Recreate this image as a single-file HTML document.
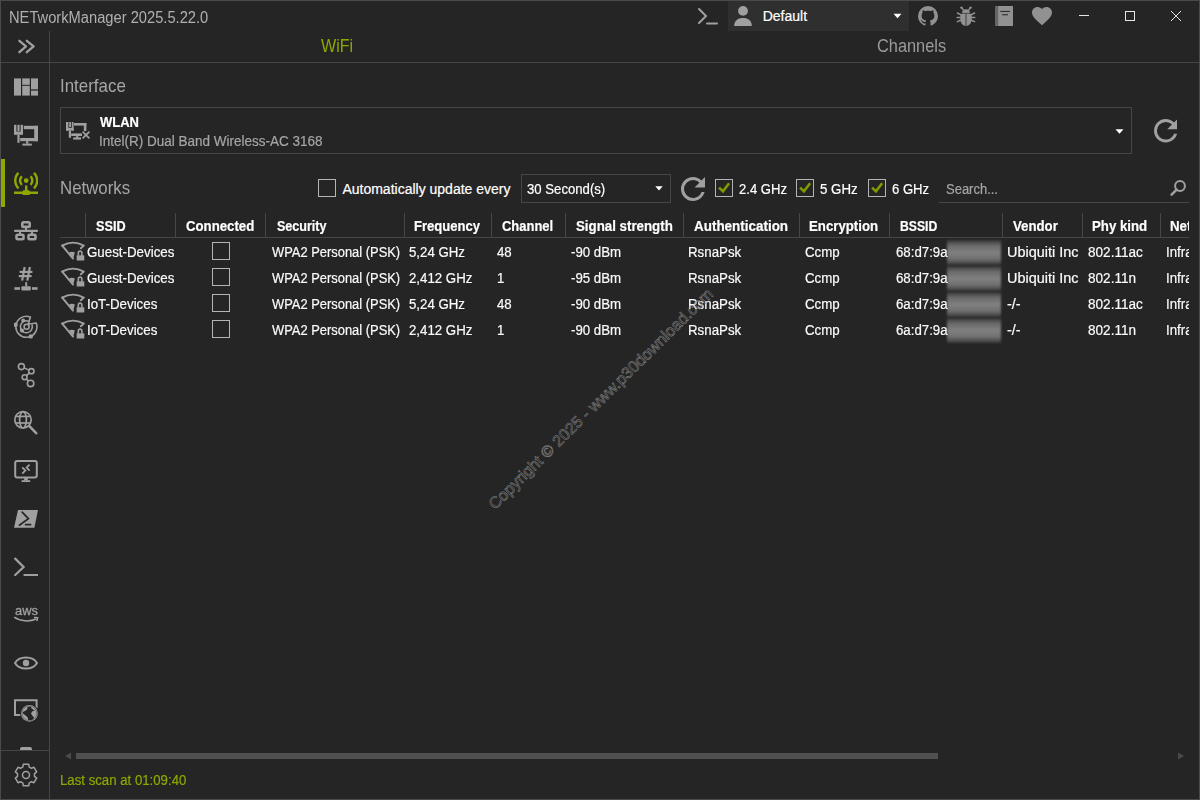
<!DOCTYPE html>
<html><head><meta charset="utf-8"><style>
html,body{margin:0;padding:0;}
body{width:1200px;height:800px;background:#252525;position:relative;overflow:hidden;font-family:"Liberation Sans",sans-serif;}
.t{position:absolute;white-space:nowrap;line-height:1;-webkit-text-stroke:0.2px currentColor;}
.wm{font-size:16px;color:transparent;-webkit-text-stroke:0.5px #858585;transform-origin:0 0;transform:rotate(-44.5deg);}
</style></head><body>
<div style="position:absolute;left:0px;top:0px;width:1200px;height:800px;box-sizing:border-box;border:1px solid #4a4a4a;"></div><div class="t" style="left:8.60px;top:9.63px;font-size:15.8px;color:#b0b0b0;font-weight:normal;-webkit-text-stroke:0;transform:scaleX(0.93);transform-origin:0 0;">NETworkManager 2025.5.22.0</div><svg style="position:absolute;left:696px;top:6px;" width="24" height="20" viewBox="0 0 24 20"><polyline points="3,3 10,10 3,17" fill="none" stroke="#a0a0a0" stroke-width="2" stroke-linecap="round" stroke-linejoin="miter"/><line x1="11" y1="17.5" x2="21" y2="17.5" stroke="#a0a0a0" stroke-width="2" stroke-linecap="round"/></svg><div style="position:absolute;left:728px;top:1px;width:181px;height:30px;background:#2f2f2f;"></div><svg style="position:absolute;left:733px;top:5px;" width="20" height="22" viewBox="0 0 20 22"><circle cx="10" cy="5.9" r="4.9" fill="#a0a0a0"/><path d="M1.2,21 C1.2,15.5 5,13 10,13 C15,13 18.8,15.5 18.8,21 Z" fill="#a0a0a0"/></svg><div class="t" style="left:762.70px;top:9px;font-size:14px;color:#ffffff;font-weight:normal;transform:scaleX(1.0);transform-origin:0 0">Default</div><svg style="position:absolute;left:893px;top:13px;" width="9" height="6" viewBox="0 0 9 6"><polygon points="0.5,0.8 8.5,0.8 4.5,5.2" fill="#ffffff"/></svg><svg style="position:absolute;left:918px;top:6px;" width="20" height="20" viewBox="2 2 20 20"><path fill="#919191" d="M12,2A10,10 0 0,0 2,12C2,16.42 4.87,20.17 8.84,21.5C9.34,21.58 9.5,21.27 9.5,21C9.5,20.77 9.5,20.14 9.5,19.31C6.73,19.94 6.14,18 6.14,18C5.68,16.84 5.03,16.5 5.03,16.5C4.12,15.88 5.1,15.9 5.1,15.9C6.1,15.97 6.63,16.93 6.63,16.93C7.5,18.45 8.97,18 9.54,17.76C9.63,17.11 9.89,16.67 10.17,16.42C7.95,16.17 5.62,15.31 5.62,11.5C5.62,10.39 6,9.5 6.65,8.79C6.55,8.54 6.2,7.5 6.75,6.15C6.75,6.15 7.59,5.88 9.5,7.17C10.29,6.95 11.15,6.84 12,6.84C12.85,6.84 13.71,6.95 14.5,7.17C16.41,5.88 17.25,6.15 17.25,6.15C17.8,7.5 17.45,8.54 17.35,8.79C18,9.5 18.38,10.39 18.38,11.5C18.38,15.32 16.04,16.16 13.81,16.41C14.17,16.72 14.5,17.33 14.5,18.26C14.5,19.6 14.5,20.68 14.5,21C14.5,21.27 14.66,21.59 15.17,21.5C19.14,20.16 22,16.42 22,12A10,10 0 0,0 12,2Z"/></svg><svg style="position:absolute;left:956px;top:5px;" width="20" height="22" viewBox="956 5 20 22"><g fill="#919191"><ellipse cx="966" cy="12.6" rx="3.8" ry="3.3"/><path d="M960.3,13.6 H971.7 V19 C971.7,23.2 969.2,25.9 966,25.9 C962.8,25.9 960.3,23.2 960.3,19 Z"/><circle cx="961.4" cy="7.6" r="1.2"/><circle cx="970.6" cy="7.6" r="1.2"/></g><g stroke="#919191" stroke-width="1.5" stroke-linecap="round"><line x1="961.6" y1="7.8" x2="963.6" y2="10.4"/><line x1="970.4" y1="7.8" x2="968.4" y2="10.4"/><line x1="957.4" y1="13" x2="960.6" y2="14.7"/><line x1="974.6" y1="13" x2="971.4" y2="14.7"/><line x1="957.2" y1="17.4" x2="960.4" y2="17.4"/><line x1="974.8" y1="17.4" x2="971.6" y2="17.4"/><line x1="957.4" y1="21.6" x2="960.6" y2="20.3"/><line x1="974.6" y1="21.6" x2="971.4" y2="20.3"/></g><line x1="960" y1="13.4" x2="972" y2="13.4" stroke="#3a3a3a" stroke-width="0.8"/><line x1="966" y1="13.8" x2="966" y2="26" stroke="#4a4a4a" stroke-width="1.1"/></svg><svg style="position:absolute;left:995px;top:6px;" width="18" height="20" viewBox="0 0 18 20"><rect x="0" y="0" width="18" height="20" fill="#919191"/><rect x="0" y="0" width="2.4" height="20" fill="#666"/><rect x="2.4" y="0" width="0.7" height="20" fill="#555"/><rect x="5.3" y="4.9" width="9.7" height="1.1" fill="#2e2e2e"/><rect x="7" y="8.2" width="6" height="1.1" fill="#2e2e2e"/></svg><svg style="position:absolute;left:1030px;top:3.8px;" width="24" height="24" viewBox="0 0 24 24"><path fill="#919191" d="M12,21.35L10.55,20.03C5.4,15.36 2,12.27 2,8.5C2,5.41 4.42,3 7.5,3C9.24,3 10.91,3.81 12,5.08C13.09,3.81 14.76,3 16.5,3C19.58,3 22,5.41 22,8.5C22,12.27 18.6,15.36 13.45,20.03L12,21.35Z"/></svg><div style="position:absolute;left:1079px;top:15px;width:10px;height:1px;background:#e6e6e6;"></div><div style="position:absolute;left:1125px;top:11px;width:10px;height:10px;box-sizing:border-box;border:1px solid #e6e6e6;"></div><svg style="position:absolute;left:1170px;top:10px;" width="12" height="12" viewBox="0 0 12 12"><line x1="1" y1="1" x2="11" y2="11" stroke="#e6e6e6" stroke-width="1"/><line x1="11" y1="1" x2="1" y2="11" stroke="#e6e6e6" stroke-width="1"/></svg><div style="position:absolute;left:49px;top:31px;width:1px;height:768px;background:#464646;"></div><div style="position:absolute;left:1px;top:62px;width:1198px;height:1px;background:#464646;"></div><div style="position:absolute;left:1px;top:750px;width:48px;height:1px;background:#464646;"></div><div class="t" style="left:321.00px;top:36.59px;font-size:18.2px;color:#8fa700;font-weight:normal;-webkit-text-stroke:0;transform:scaleX(0.885);transform-origin:0 0;">WiFi</div><div class="t" style="left:877.00px;top:36.51px;font-size:18.3px;color:#9a9a9a;font-weight:normal;-webkit-text-stroke:0;transform:scaleX(0.895);transform-origin:0 0;">Channels</div><div class="t" style="left:59.50px;top:77.85px;font-size:17.9px;color:#a6a6a6;font-weight:normal;-webkit-text-stroke:0;transform:scaleX(0.945);transform-origin:0 0;">Interface</div><div style="position:absolute;left:60px;top:107px;width:1072px;height:47px;box-sizing:border-box;border:1px solid #464646;"></div><div class="t" style="left:100.40px;top:115px;font-size:14px;color:#ffffff;font-weight:bold;transform:scaleX(0.9286);transform-origin:0 0">WLAN</div><div class="t" style="left:99.44px;top:134px;font-size:14px;color:#a6a6a6;font-weight:normal;transform:scaleX(0.9636);transform-origin:0 0">Intel(R) Dual Band Wireless-AC 3168</div><svg style="position:absolute;left:1115px;top:128.5px;" width="9" height="5" viewBox="0 0 9 5"><polygon points="0.5,0.3 8.5,0.3 4.5,4.8" fill="#ffffff"/></svg><svg style="position:absolute;left:66px;top:122px;" width="24" height="18" viewBox="66 122 24 18"><g fill="#a0a0a0"><rect x="66" y="122" width="2.4" height="8.6"/><rect x="69.2" y="122" width="1.8" height="5"/><rect x="71.8" y="122" width="1.8" height="8.6"/><rect x="66" y="127.8" width="7.6" height="2.8"/><rect x="68.8" y="130.6" width="2.2" height="7.2"/><rect x="74" y="123" width="12.4" height="2.6"/><rect x="83.8" y="123" width="2.6" height="8"/><rect x="71.2" y="133.4" width="10.8" height="2.6"/><rect x="76.2" y="136" width="2" height="2"/><rect x="73.2" y="137.4" width="7.8" height="2.2"/></g><g stroke="#a0a0a0" stroke-width="1.7"><line x1="82.6" y1="131.6" x2="89.4" y2="138.4"/><line x1="89.4" y1="131.6" x2="82.6" y2="138.4"/></g></svg><svg style="position:absolute;left:1153.5px;top:119px;" width="23.5" height="23.5" viewBox="4 4 16 16"><path fill="#a0a0a0" d="M17.65,6.35C16.2,4.9 14.21,4 12,4A8,8 0 0,0 4,12A8,8 0 0,0 12,20C15.73,20 18.84,17.45 19.73,14H17.65C16.83,16.33 14.61,18 12,18A6,6 0 0,1 6,12A6,6 0 0,1 12,6C13.66,6 15.14,6.69 16.22,7.78L13,11H20V4L17.65,6.35Z"/></svg><div class="t" style="left:59.50px;top:180.05px;font-size:17.9px;color:#a6a6a6;font-weight:normal;-webkit-text-stroke:0;transform:scaleX(0.94);transform-origin:0 0;">Networks</div><div style="position:absolute;left:318px;top:179px;width:18px;height:18px;box-sizing:border-box;border:1px solid #b4b4b4;"></div><div class="t" style="left:342.40px;top:182px;font-size:14px;color:#ffffff;font-weight:normal;transform:scaleX(1.0);transform-origin:0 0">Automatically update every</div><div style="position:absolute;left:521px;top:174px;width:150px;height:29px;box-sizing:border-box;border:1px solid #464646;"></div><div class="t" style="left:527.00px;top:182px;font-size:14px;color:#ffffff;font-weight:normal;transform:scaleX(0.9398);transform-origin:0 0">30 Second(s)</div><svg style="position:absolute;left:654.5px;top:186px;" width="8" height="5" viewBox="0 0 8 5"><polygon points="0.3,0.3 7.7,0.3 4,4.5" fill="#ffffff"/></svg><svg style="position:absolute;left:681px;top:177px;" width="24" height="24" viewBox="4 4 16 16"><path fill="#a0a0a0" d="M17.65,6.35C16.2,4.9 14.21,4 12,4A8,8 0 0,0 4,12A8,8 0 0,0 12,20C15.73,20 18.84,17.45 19.73,14H17.65C16.83,16.33 14.61,18 12,18A6,6 0 0,1 6,12A6,6 0 0,1 12,6C13.66,6 15.14,6.69 16.22,7.78L13,11H20V4L17.65,6.35Z"/></svg><div style="position:absolute;left:715px;top:179px;width:18px;height:18px;box-sizing:border-box;border:1px solid #b4b4b4;"></div><svg style="position:absolute;left:715px;top:179px;" width="18" height="18" viewBox="0 0 18 18"><polyline points="4.05,8.6 7.95,12.3 14.1,4.2" fill="none" stroke="#809a00" stroke-width="2.6"/></svg><div class="t" style="left:739.00px;top:182px;font-size:14px;color:#ffffff;font-weight:normal;transform:scaleX(0.9333);transform-origin:0 0">2.4 GHz</div><div style="position:absolute;left:796px;top:179px;width:18px;height:18px;box-sizing:border-box;border:1px solid #b4b4b4;"></div><svg style="position:absolute;left:796px;top:179px;" width="18" height="18" viewBox="0 0 18 18"><polyline points="4.05,8.6 7.95,12.3 14.1,4.2" fill="none" stroke="#809a00" stroke-width="2.6"/></svg><div class="t" style="left:819.65px;top:182px;font-size:14px;color:#ffffff;font-weight:normal;transform:scaleX(0.9487);transform-origin:0 0">5 GHz</div><div style="position:absolute;left:868px;top:179px;width:18px;height:18px;box-sizing:border-box;border:1px solid #b4b4b4;"></div><svg style="position:absolute;left:868px;top:179px;" width="18" height="18" viewBox="0 0 18 18"><polyline points="4.05,8.6 7.95,12.3 14.1,4.2" fill="none" stroke="#809a00" stroke-width="2.6"/></svg><div class="t" style="left:891.60px;top:182px;font-size:14px;color:#ffffff;font-weight:normal;transform:scaleX(0.935);transform-origin:0 0">6 GHz</div><div class="t" style="left:945.97px;top:182px;font-size:14px;color:#a6a6a6;font-weight:normal;transform:scaleX(0.9278);transform-origin:0 0">Search...</div><svg style="position:absolute;left:1168px;top:179px;" width="20" height="18" viewBox="0 0 20 18"><circle cx="12" cy="7" r="4.9" fill="none" stroke="#a0a0a0" stroke-width="2"/><line x1="8.6" y1="10.6" x2="3.6" y2="15.6" stroke="#a0a0a0" stroke-width="2.6" stroke-linecap="round"/></svg><div style="position:absolute;left:939px;top:202px;width:250px;height:1px;background:#464646;"></div><div style="position:absolute;left:85px;top:213px;width:1px;height:24px;background:#464646;"></div><div style="position:absolute;left:175px;top:213px;width:1px;height:24px;background:#464646;"></div><div style="position:absolute;left:265px;top:213px;width:1px;height:24px;background:#464646;"></div><div style="position:absolute;left:404px;top:213px;width:1px;height:24px;background:#464646;"></div><div style="position:absolute;left:491px;top:213px;width:1px;height:24px;background:#464646;"></div><div style="position:absolute;left:565px;top:213px;width:1px;height:24px;background:#464646;"></div><div style="position:absolute;left:683px;top:213px;width:1px;height:24px;background:#464646;"></div><div style="position:absolute;left:799px;top:213px;width:1px;height:24px;background:#464646;"></div><div style="position:absolute;left:889px;top:213px;width:1px;height:24px;background:#464646;"></div><div style="position:absolute;left:1002px;top:213px;width:1px;height:24px;background:#464646;"></div><div style="position:absolute;left:1082px;top:213px;width:1px;height:24px;background:#464646;"></div><div style="position:absolute;left:1160px;top:213px;width:1px;height:24px;background:#464646;"></div><div style="position:absolute;left:60px;top:237px;width:1129px;height:1px;background:#464646;"></div><div style="position:absolute;left:60px;top:205px;width:1129px;height:40px;overflow:hidden"><div class="t" style="left:36.00px;top:14px;font-size:14px;color:#ffffff;font-weight:bold;transform:scaleX(0.906);transform-origin:0 0">SSID</div><div class="t" style="left:126.00px;top:14px;font-size:14px;color:#ffffff;font-weight:bold;transform:scaleX(0.944);transform-origin:0 0">Connected</div><div class="t" style="left:216.50px;top:14px;font-size:14px;color:#ffffff;font-weight:bold;transform:scaleX(0.896);transform-origin:0 0">Security</div><div class="t" style="left:353.80px;top:14px;font-size:14px;color:#ffffff;font-weight:bold;transform:scaleX(0.933);transform-origin:0 0">Frequency</div><div class="t" style="left:442.00px;top:14px;font-size:14px;color:#ffffff;font-weight:bold;transform:scaleX(0.927);transform-origin:0 0">Channel</div><div class="t" style="left:515.50px;top:14px;font-size:14px;color:#ffffff;font-weight:bold;transform:scaleX(0.95);transform-origin:0 0">Signal strength</div><div class="t" style="left:633.90px;top:14px;font-size:14px;color:#ffffff;font-weight:bold;transform:scaleX(0.96);transform-origin:0 0">Authentication</div><div class="t" style="left:749.10px;top:14px;font-size:14px;color:#ffffff;font-weight:bold;transform:scaleX(0.944);transform-origin:0 0">Encryption</div><div class="t" style="left:839.90px;top:14px;font-size:14px;color:#ffffff;font-weight:bold;transform:scaleX(0.871);transform-origin:0 0">BSSID</div><div class="t" style="left:952.50px;top:14px;font-size:14px;color:#ffffff;font-weight:bold;transform:scaleX(0.944);transform-origin:0 0">Vendor</div><div class="t" style="left:1032.40px;top:14px;font-size:14px;color:#ffffff;font-weight:bold;transform:scaleX(0.946);transform-origin:0 0">Phy kind</div><div class="t" style="left:1109.80px;top:14px;font-size:14px;color:#ffffff;font-weight:bold;transform:scaleX(0.95);transform-origin:0 0">Network kind</div></div><svg style="position:absolute;left:60px;top:241px;" width="25" height="22" viewBox="0 0 25 22"><path d="M2.2,4.6 Q13,-1.4 23.8,4.6 L20.9,7.3" fill="none" stroke="#a0a0a0" stroke-width="1.9" stroke-linejoin="round" stroke-linecap="round"/><path d="M2.2,4.6 L13,17.6" fill="none" stroke="#a0a0a0" stroke-width="1.9" stroke-linecap="round"/><path d="M9,11.4 C11,10.6 13,10.6 14.9,11.6 L13,18 Z" fill="#a0a0a0"/><path d="M18.3,14.6 V11.9 A1.8,1.8 0 0 1 21.9,11.9 V14.6" fill="none" stroke="#a0a0a0" stroke-width="1.6"/><rect x="16.2" y="14.2" width="8.1" height="5.3" rx="0.5" fill="#a0a0a0"/><path d="M14.9,13 L16.2,13 L16.2,20" fill="none" stroke="#252525" stroke-width="0.8"/></svg><div style="position:absolute;left:212px;top:242px;width:18px;height:18px;box-sizing:border-box;border:1px solid #b4b4b4;"></div><div style="position:absolute;left:947px;top:240px;width:54px;height:25px;background:linear-gradient(to bottom,#363636 0%,#6a6a6a 22%,#808080 50%,#707070 76%,#383838 100%);filter:blur(0.8px);"></div><div class="t" style="left:87.40px;top:245px;font-size:14px;color:#fafafa;font-weight:normal;transform:scaleX(0.952);transform-origin:0 0">Guest-Devices</div><div class="t" style="left:272.00px;top:245px;font-size:14px;color:#fafafa;font-weight:normal;transform:scaleX(0.922);transform-origin:0 0">WPA2 Personal (PSK)</div><div class="t" style="left:409.00px;top:245px;font-size:14px;color:#fafafa;font-weight:normal;transform:scaleX(0.947);transform-origin:0 0">5,24 GHz</div><div class="t" style="left:496.80px;top:245px;font-size:14px;color:#fafafa;font-weight:normal;transform:scaleX(0.947);transform-origin:0 0">48</div><div class="t" style="left:571.20px;top:245px;font-size:14px;color:#fafafa;font-weight:normal;transform:scaleX(0.947);transform-origin:0 0">-90 dBm</div><div class="t" style="left:688.30px;top:245px;font-size:14px;color:#fafafa;font-weight:normal;transform:scaleX(0.95);transform-origin:0 0">RsnaPsk</div><div class="t" style="left:804.80px;top:245px;font-size:14px;color:#fafafa;font-weight:normal;transform:scaleX(0.95);transform-origin:0 0">Ccmp</div><div class="t" style="left:896.10px;top:245px;font-size:14px;color:#fafafa;font-weight:normal;transform:scaleX(0.947);transform-origin:0 0">68:d7:9a</div><div class="t" style="left:1006.50px;top:245px;font-size:14px;color:#fafafa;font-weight:normal;transform:scaleX(1.031);transform-origin:0 0">Ubiquiti Inc</div><div class="t" style="left:1088.00px;top:245px;font-size:14px;color:#fafafa;font-weight:normal;transform:scaleX(0.97);transform-origin:0 0">802.11ac</div><div style="position:absolute;left:1160px;top:238px;width:29px;height:26px;overflow:hidden"><div class="t" style="left:5.6px;top:7px;font-size:14px;color:#fafafa;transform:scaleX(0.95);transform-origin:0 0">Infrastructure</div></div><svg style="position:absolute;left:60px;top:267px;" width="25" height="22" viewBox="0 0 25 22"><path d="M2.2,4.6 Q13,-1.4 23.8,4.6 L20.9,7.3" fill="none" stroke="#a0a0a0" stroke-width="1.9" stroke-linejoin="round" stroke-linecap="round"/><path d="M2.2,4.6 L13,17.6" fill="none" stroke="#a0a0a0" stroke-width="1.9" stroke-linecap="round"/><path d="M9,11.4 C11,10.6 13,10.6 14.9,11.6 L13,18 Z" fill="#a0a0a0"/><path d="M18.3,14.6 V11.9 A1.8,1.8 0 0 1 21.9,11.9 V14.6" fill="none" stroke="#a0a0a0" stroke-width="1.6"/><rect x="16.2" y="14.2" width="8.1" height="5.3" rx="0.5" fill="#a0a0a0"/><path d="M14.9,13 L16.2,13 L16.2,20" fill="none" stroke="#252525" stroke-width="0.8"/></svg><div style="position:absolute;left:212px;top:268px;width:18px;height:18px;box-sizing:border-box;border:1px solid #b4b4b4;"></div><div style="position:absolute;left:947px;top:266px;width:54px;height:25px;background:linear-gradient(to bottom,#363636 0%,#6a6a6a 22%,#808080 50%,#707070 76%,#383838 100%);filter:blur(0.8px);"></div><div class="t" style="left:87.40px;top:271px;font-size:14px;color:#fafafa;font-weight:normal;transform:scaleX(0.952);transform-origin:0 0">Guest-Devices</div><div class="t" style="left:272.00px;top:271px;font-size:14px;color:#fafafa;font-weight:normal;transform:scaleX(0.922);transform-origin:0 0">WPA2 Personal (PSK)</div><div class="t" style="left:409.00px;top:271px;font-size:14px;color:#fafafa;font-weight:normal;transform:scaleX(0.947);transform-origin:0 0">2,412 GHz</div><div class="t" style="left:496.80px;top:271px;font-size:14px;color:#fafafa;font-weight:normal;transform:scaleX(0.947);transform-origin:0 0">1</div><div class="t" style="left:571.20px;top:271px;font-size:14px;color:#fafafa;font-weight:normal;transform:scaleX(0.947);transform-origin:0 0">-95 dBm</div><div class="t" style="left:688.30px;top:271px;font-size:14px;color:#fafafa;font-weight:normal;transform:scaleX(0.95);transform-origin:0 0">RsnaPsk</div><div class="t" style="left:804.80px;top:271px;font-size:14px;color:#fafafa;font-weight:normal;transform:scaleX(0.95);transform-origin:0 0">Ccmp</div><div class="t" style="left:896.10px;top:271px;font-size:14px;color:#fafafa;font-weight:normal;transform:scaleX(0.947);transform-origin:0 0">68:d7:9a</div><div class="t" style="left:1006.50px;top:271px;font-size:14px;color:#fafafa;font-weight:normal;transform:scaleX(1.031);transform-origin:0 0">Ubiquiti Inc</div><div class="t" style="left:1088.00px;top:271px;font-size:14px;color:#fafafa;font-weight:normal;transform:scaleX(0.97);transform-origin:0 0">802.11n</div><div style="position:absolute;left:1160px;top:264px;width:29px;height:26px;overflow:hidden"><div class="t" style="left:5.6px;top:7px;font-size:14px;color:#fafafa;transform:scaleX(0.95);transform-origin:0 0">Infrastructure</div></div><svg style="position:absolute;left:60px;top:293px;" width="25" height="22" viewBox="0 0 25 22"><path d="M2.2,4.6 Q13,-1.4 23.8,4.6 L20.9,7.3" fill="none" stroke="#a0a0a0" stroke-width="1.9" stroke-linejoin="round" stroke-linecap="round"/><path d="M2.2,4.6 L13,17.6" fill="none" stroke="#a0a0a0" stroke-width="1.9" stroke-linecap="round"/><path d="M9,11.4 C11,10.6 13,10.6 14.9,11.6 L13,18 Z" fill="#a0a0a0"/><path d="M18.3,14.6 V11.9 A1.8,1.8 0 0 1 21.9,11.9 V14.6" fill="none" stroke="#a0a0a0" stroke-width="1.6"/><rect x="16.2" y="14.2" width="8.1" height="5.3" rx="0.5" fill="#a0a0a0"/><path d="M14.9,13 L16.2,13 L16.2,20" fill="none" stroke="#252525" stroke-width="0.8"/></svg><div style="position:absolute;left:212px;top:294px;width:18px;height:18px;box-sizing:border-box;border:1px solid #b4b4b4;"></div><div style="position:absolute;left:947px;top:292px;width:54px;height:25px;background:linear-gradient(to bottom,#363636 0%,#6a6a6a 22%,#808080 50%,#707070 76%,#383838 100%);filter:blur(0.8px);"></div><div class="t" style="left:87.40px;top:297px;font-size:14px;color:#fafafa;font-weight:normal;transform:scaleX(0.952);transform-origin:0 0">IoT-Devices</div><div class="t" style="left:272.00px;top:297px;font-size:14px;color:#fafafa;font-weight:normal;transform:scaleX(0.922);transform-origin:0 0">WPA2 Personal (PSK)</div><div class="t" style="left:409.00px;top:297px;font-size:14px;color:#fafafa;font-weight:normal;transform:scaleX(0.947);transform-origin:0 0">5,24 GHz</div><div class="t" style="left:496.80px;top:297px;font-size:14px;color:#fafafa;font-weight:normal;transform:scaleX(0.947);transform-origin:0 0">48</div><div class="t" style="left:571.20px;top:297px;font-size:14px;color:#fafafa;font-weight:normal;transform:scaleX(0.947);transform-origin:0 0">-90 dBm</div><div class="t" style="left:688.30px;top:297px;font-size:14px;color:#fafafa;font-weight:normal;transform:scaleX(0.95);transform-origin:0 0">RsnaPsk</div><div class="t" style="left:804.80px;top:297px;font-size:14px;color:#fafafa;font-weight:normal;transform:scaleX(0.95);transform-origin:0 0">Ccmp</div><div class="t" style="left:896.10px;top:297px;font-size:14px;color:#fafafa;font-weight:normal;transform:scaleX(0.947);transform-origin:0 0">6a:d7:9a</div><div class="t" style="left:1006.50px;top:297px;font-size:14px;color:#fafafa;font-weight:normal;transform:scaleX(1.031);transform-origin:0 0">-/-</div><div class="t" style="left:1088.00px;top:297px;font-size:14px;color:#fafafa;font-weight:normal;transform:scaleX(0.97);transform-origin:0 0">802.11ac</div><div style="position:absolute;left:1160px;top:290px;width:29px;height:26px;overflow:hidden"><div class="t" style="left:5.6px;top:7px;font-size:14px;color:#fafafa;transform:scaleX(0.95);transform-origin:0 0">Infrastructure</div></div><svg style="position:absolute;left:60px;top:319px;" width="25" height="22" viewBox="0 0 25 22"><path d="M2.2,4.6 Q13,-1.4 23.8,4.6 L20.9,7.3" fill="none" stroke="#a0a0a0" stroke-width="1.9" stroke-linejoin="round" stroke-linecap="round"/><path d="M2.2,4.6 L13,17.6" fill="none" stroke="#a0a0a0" stroke-width="1.9" stroke-linecap="round"/><path d="M9,11.4 C11,10.6 13,10.6 14.9,11.6 L13,18 Z" fill="#a0a0a0"/><path d="M18.3,14.6 V11.9 A1.8,1.8 0 0 1 21.9,11.9 V14.6" fill="none" stroke="#a0a0a0" stroke-width="1.6"/><rect x="16.2" y="14.2" width="8.1" height="5.3" rx="0.5" fill="#a0a0a0"/><path d="M14.9,13 L16.2,13 L16.2,20" fill="none" stroke="#252525" stroke-width="0.8"/></svg><div style="position:absolute;left:212px;top:320px;width:18px;height:18px;box-sizing:border-box;border:1px solid #b4b4b4;"></div><div style="position:absolute;left:947px;top:318px;width:54px;height:25px;background:linear-gradient(to bottom,#363636 0%,#6a6a6a 22%,#808080 50%,#707070 76%,#383838 100%);filter:blur(0.8px);"></div><div class="t" style="left:87.40px;top:323px;font-size:14px;color:#fafafa;font-weight:normal;transform:scaleX(0.952);transform-origin:0 0">IoT-Devices</div><div class="t" style="left:272.00px;top:323px;font-size:14px;color:#fafafa;font-weight:normal;transform:scaleX(0.922);transform-origin:0 0">WPA2 Personal (PSK)</div><div class="t" style="left:409.00px;top:323px;font-size:14px;color:#fafafa;font-weight:normal;transform:scaleX(0.947);transform-origin:0 0">2,412 GHz</div><div class="t" style="left:496.80px;top:323px;font-size:14px;color:#fafafa;font-weight:normal;transform:scaleX(0.947);transform-origin:0 0">1</div><div class="t" style="left:571.20px;top:323px;font-size:14px;color:#fafafa;font-weight:normal;transform:scaleX(0.947);transform-origin:0 0">-90 dBm</div><div class="t" style="left:688.30px;top:323px;font-size:14px;color:#fafafa;font-weight:normal;transform:scaleX(0.95);transform-origin:0 0">RsnaPsk</div><div class="t" style="left:804.80px;top:323px;font-size:14px;color:#fafafa;font-weight:normal;transform:scaleX(0.95);transform-origin:0 0">Ccmp</div><div class="t" style="left:896.10px;top:323px;font-size:14px;color:#fafafa;font-weight:normal;transform:scaleX(0.947);transform-origin:0 0">6a:d7:9a</div><div class="t" style="left:1006.50px;top:323px;font-size:14px;color:#fafafa;font-weight:normal;transform:scaleX(1.031);transform-origin:0 0">-/-</div><div class="t" style="left:1088.00px;top:323px;font-size:14px;color:#fafafa;font-weight:normal;transform:scaleX(0.97);transform-origin:0 0">802.11n</div><div style="position:absolute;left:1160px;top:316px;width:29px;height:26px;overflow:hidden"><div class="t" style="left:5.6px;top:7px;font-size:14px;color:#fafafa;transform:scaleX(0.95);transform-origin:0 0">Infrastructure</div></div><div class="t wm" style="left:486px;top:501px;">Copyright © 2025 - www.p30download.com</div><svg style="position:absolute;left:64px;top:752px;" width="8" height="8" viewBox="0 0 8 8"><polygon points="1,4 7,0.5 7,7.5" fill="#4a4a4a"/></svg><div style="position:absolute;left:76px;top:753px;width:862px;height:6px;background:#505050;"></div><svg style="position:absolute;left:1177px;top:752px;" width="8" height="8" viewBox="0 0 8 8"><polygon points="7,4 1,0.5 1,7.5" fill="#4a4a4a"/></svg><div class="t" style="left:60.06px;top:773px;font-size:14px;color:#8fa700;font-weight:normal;transform:scaleX(0.9436);transform-origin:0 0">Last scan at 01:09:40</div><svg style="position:absolute;left:14px;top:34px;" width="24" height="24" viewBox="0 0 24 24"><polyline points="5.4,6.8 12,12.4 5.4,18.2" fill="none" stroke="#a0a0a0" stroke-width="2.3" stroke-linecap="round" stroke-linejoin="round"/><polyline points="12.8,6.8 19.6,12.4 12.8,18.2" fill="none" stroke="#a0a0a0" stroke-width="2.3" stroke-linecap="round" stroke-linejoin="round"/></svg><svg style="position:absolute;left:14px;top:78px;" width="24" height="18" viewBox="0 0 24 18"><g fill="#a0a0a0"><rect x="0" y="0.4" width="7" height="17.2"/><rect x="8.2" y="0.4" width="7.6" height="6.4"/><rect x="8.2" y="7.8" width="7.6" height="9.8"/><rect x="17" y="0.4" width="7" height="10.6"/><rect x="17" y="12.6" width="7" height="5"/></g><rect x="17" y="11" width="7" height="1.6" fill="#505050"/></svg><svg style="position:absolute;left:14px;top:118px;" width="24" height="28" viewBox="0 0 24 28"><g fill="#a0a0a0"><rect x="0" y="6.8" width="2.4" height="7.4"/><rect x="3.4" y="6.8" width="2.2" height="6.4"/><rect x="6.6" y="6.8" width="2.4" height="7.4"/><rect x="0" y="13.6" width="9" height="3.2"/><rect x="3.4" y="16.8" width="2.2" height="8"/><rect x="9.8" y="7.8" width="14.2" height="3.4"/><rect x="20.2" y="7.8" width="3.8" height="15.4"/><rect x="6.2" y="20" width="17.8" height="3.2"/><rect x="12" y="23.2" width="2.4" height="2.4"/><rect x="8.4" y="25.6" width="9.4" height="2"/></g></svg><svg style="position:absolute;left:13.8px;top:171.5px;" width="24.4" height="23.2" viewBox="2 2.93 20 19.07"><path fill="#8fa700" d="M4.93,2.93C3.12,4.74 2,7.24 2,10C2,12.76 3.12,15.26 4.93,17.07L6.34,15.66C4.89,14.22 4,12.22 4,10C4,7.79 4.89,5.78 6.34,4.34L4.93,2.93M19.07,2.93L17.66,4.34C19.11,5.78 20,7.79 20,10C20,12.22 19.11,14.22 17.66,15.66L19.07,17.07C20.88,15.26 22,12.76 22,10C22,7.24 20.88,4.74 19.07,2.93M7.76,5.76C6.67,6.85 6,8.350 6,10C6,11.65 6.67,13.15 7.76,14.24L9.17,12.83C8.45,12.11 8,11.11 8,10C8,8.89 8.45,7.89 9.17,7.17L7.76,5.76M16.24,5.76L14.83,7.17C15.55,7.89 16,8.89 16,10C16,11.11 15.55,12.11 14.83,12.83L16.24,14.24C17.33,13.15 18,11.65 18,10C18,8.35 17.33,6.85 16.24,5.76M12,8A2,2 0 0,0 10,10A2,2 0 0,0 12,12A2,2 0 0,0 14,10A2,2 0 0,0 12,8M11,14V18H10A1,1 0 0,0 9,19H2V21H9A1,1 0 0,0 10,22H14A1,1 0 0,0 15,21H22V19H15A1,1 0 0,0 14,18H13V14H11Z"/></svg><div style="position:absolute;left:1px;top:159px;width:4px;height:48px;background:#8fa700;"></div><svg style="position:absolute;left:14px;top:220px;" width="24" height="22" viewBox="0 0 24 22"><g fill="none" stroke="#a0a0a0" stroke-width="2.6"><rect x="8.3" y="2.3" width="7.4" height="4.6" rx="1.2"/><rect x="2.5" y="14.7" width="7" height="4.6" rx="1.2"/><rect x="14.5" y="14.7" width="7" height="4.6" rx="1.2"/></g><g fill="#a0a0a0"><rect x="0" y="9.8" width="24" height="2.2" rx="1"/><rect x="11" y="8" width="2" height="2"/><rect x="5" y="12" width="2" height="2"/><rect x="17" y="12" width="2" height="2"/></g></svg><svg style="position:absolute;left:14px;top:263px;" width="24" height="28" viewBox="0 0 24 28"><g stroke="#a0a0a0" stroke-width="2.2" fill="none"><line x1="10.7" y1="4" x2="8.1" y2="17.6"/><line x1="15.9" y1="4" x2="13.3" y2="17.6"/><line x1="5.6" y1="8.9" x2="18.4" y2="8.9"/><line x1="4.8" y1="13.1" x2="17.6" y2="13.1"/></g><g fill="#a0a0a0"><rect x="11.2" y="19.2" width="2" height="4"/><rect x="7.4" y="23.2" width="9.4" height="4.4" rx="1"/><rect x="0.4" y="24.2" width="5.6" height="2.6"/><rect x="18" y="24.2" width="5.6" height="2.6"/></g></svg><svg style="position:absolute;left:14px;top:314px;" width="24" height="26" viewBox="0 0 24 26"><g fill="none" stroke="#a0a0a0" stroke-width="1.6" stroke-linejoin="round"><path d="M16.42,3.10 A10.5,10.5 0 1 0 22.20,9.04 L14.2,10.2 Z"/><path d="M14.70,7.26 A6,6 0 1 0 18.0,10.65"/><circle cx="12.6" cy="12.8" r="2.5"/></g><g fill="#a0a0a0"><circle cx="1.6" cy="10.8" r="2.2"/><circle cx="9.2" cy="6.4" r="1.9"/><circle cx="8" cy="16.6" r="2.1"/><circle cx="16.8" cy="22.4" r="2.2"/></g></svg><svg style="position:absolute;left:14px;top:362px;" width="24" height="26" viewBox="0 0 24 26"><g fill="none" stroke="#a0a0a0" stroke-width="1.6"><circle cx="7.4" cy="4.6" r="3"/><circle cx="17.4" cy="9.2" r="2.6"/><circle cx="10.6" cy="15.2" r="2.4"/><circle cx="16.6" cy="21.4" r="3.2"/><line x1="10.2" y1="5.9" x2="14.9" y2="8.1"/><line x1="15.5" y1="10.9" x2="12.4" y2="13.6"/><line x1="12.3" y1="16.9" x2="14.4" y2="19.1"/></g></svg><svg style="position:absolute;left:12px;top:409px;" width="28" height="28" viewBox="0 0 28 28"><g fill="none" stroke="#a0a0a0" stroke-width="1.7"><circle cx="11" cy="10.8" r="8.2"/><ellipse cx="11" cy="10.8" rx="3.4" ry="8.2"/><line x1="3" y1="7.4" x2="19" y2="7.4"/><line x1="3" y1="14" x2="19" y2="14"/></g><line x1="17.6" y1="17.4" x2="24.2" y2="24.2" stroke="#a0a0a0" stroke-width="2.6" stroke-linecap="round"/></svg><svg style="position:absolute;left:14px;top:458px;" width="24" height="26" viewBox="0 0 24 26"><rect x="1.2" y="3" width="21.6" height="16.4" rx="2" fill="none" stroke="#a0a0a0" stroke-width="2"/><g fill="#a0a0a0"><rect x="10.2" y="19.4" width="3.6" height="3"/><rect x="7.6" y="22.2" width="8.6" height="1.8"/></g><g fill="none" stroke="#a0a0a0" stroke-width="1.8"><polyline points="8.2,9.4 11.4,12.4 8.2,15.6"/><polyline points="15.6,6.6 12.6,9.6 15.6,12.6"/></g></svg><svg style="position:absolute;left:14px;top:508px;" width="24" height="22" viewBox="0 0 24 22"><polygon points="4,2 24,2 20.4,19.8 0,19.8" fill="#a0a0a0"/><polyline points="8.2,4.2 14.4,10.6 5.4,17.2" fill="none" stroke="#252525" stroke-width="1.7" stroke-linecap="round"/><line x1="11.6" y1="16.6" x2="16.6" y2="16.6" stroke="#252525" stroke-width="1.7" stroke-linecap="round"/></svg><svg style="position:absolute;left:14px;top:556px;" width="24" height="22" viewBox="0 0 24 22"><polyline points="1.2,2.6 9.6,11 1.2,19" fill="none" stroke="#a0a0a0" stroke-width="2.2" stroke-linecap="round"/><line x1="10.4" y1="19" x2="23.4" y2="19" stroke="#a0a0a0" stroke-width="2.2" stroke-linecap="round"/></svg><div class="t" style="left:14.8px;top:602.6px;font-size:14px;color:#a0a0a0;letter-spacing:0px;font-weight:normal;-webkit-text-stroke:0.35px #a0a0a0;transform:scale(0.92,0.9);transform-origin:0 100%">aws</div><svg style="position:absolute;left:13px;top:615px;" width="26" height="9" viewBox="0 0 26 9"><path d="M1.2,2.2 C7,6.4 16.5,7 23,4" fill="none" stroke="#a0a0a0" stroke-width="1.5"/><polyline points="21,2.4 24.6,2.6 23.8,6" fill="none" stroke="#a0a0a0" stroke-width="1.5"/></svg><svg style="position:absolute;left:14px;top:654px;" width="24" height="18" viewBox="0 0 24 18"><path d="M1,9 C5,1.6 19,1.6 23,9 C19,16.4 5,16.4 1,9 Z" fill="none" stroke="#a0a0a0" stroke-width="1.9"/><circle cx="12" cy="9" r="3.2" fill="#a0a0a0"/></svg><svg style="position:absolute;left:14px;top:698px;" width="24" height="20" viewBox="0 0 24 20"><path d="M8,17 H1 V2.2 H22.6 V10" fill="none" stroke="#a0a0a0" stroke-width="2"/></svg><svg style="position:absolute;left:20.2px;top:704.4px;" width="18.8" height="18.8" viewBox="0 0 18.8 18.8"><circle cx="9.4" cy="9.4" r="9.4" fill="#252525"/></svg><svg style="position:absolute;left:20.2px;top:704.4px;" width="18.8" height="18.8" viewBox="0 0 18.8 18.8"><defs><clipPath id="gc"><circle cx="9.4" cy="9.4" r="7.2"/></clipPath></defs><circle cx="9.4" cy="9.4" r="8.4" fill="#a0a0a0"/><circle cx="9.4" cy="9.4" r="7.4" fill="none" stroke="#3a3a3a" stroke-width="0.5"/><polygon points="7.4,3.0 11.0,2.6 11.6,4.4 13.8,6.0 15.4,5.8 12.2,7.4 11.0,9.4 12.2,11.4 13.8,13.0 13.4,15.4 10.6,16.2 8.2,16.2 7.8,13.8 6.6,12.2 3.0,9.4 2.6,8.2 5.8,6.6 7.4,5.0" fill="#262626" clip-path="url(#gc)"/></svg><div style="position:absolute;left:20px;top:747px;width:12px;height:3px;background:#a0a0a0;border-radius:2px 2px 0 0;"></div><svg style="position:absolute;left:14px;top:763px;" width="24" height="24" viewBox="0 0 24 24"><path fill="none" stroke="#a0a0a0" stroke-width="1.5" stroke-linejoin="round" d="M15.08,3.97 L14.69,1.23 L9.31,1.23 L8.92,3.97 L6.59,5.32 L4.02,4.29 L1.33,8.94 L3.51,10.65 L3.51,13.35 L1.33,15.06 L4.02,19.71 L6.59,18.68 L8.92,20.03 L9.31,22.77 L14.69,22.77 L15.08,20.03 L17.41,18.68 L19.98,19.71 L22.67,15.06 L20.49,13.35 L20.49,10.65 L22.67,8.94 L19.98,4.29 L17.41,5.32 Z"/><circle cx="12" cy="12" r="3.5" fill="none" stroke="#a0a0a0" stroke-width="1.5"/></svg>
</body></html>
